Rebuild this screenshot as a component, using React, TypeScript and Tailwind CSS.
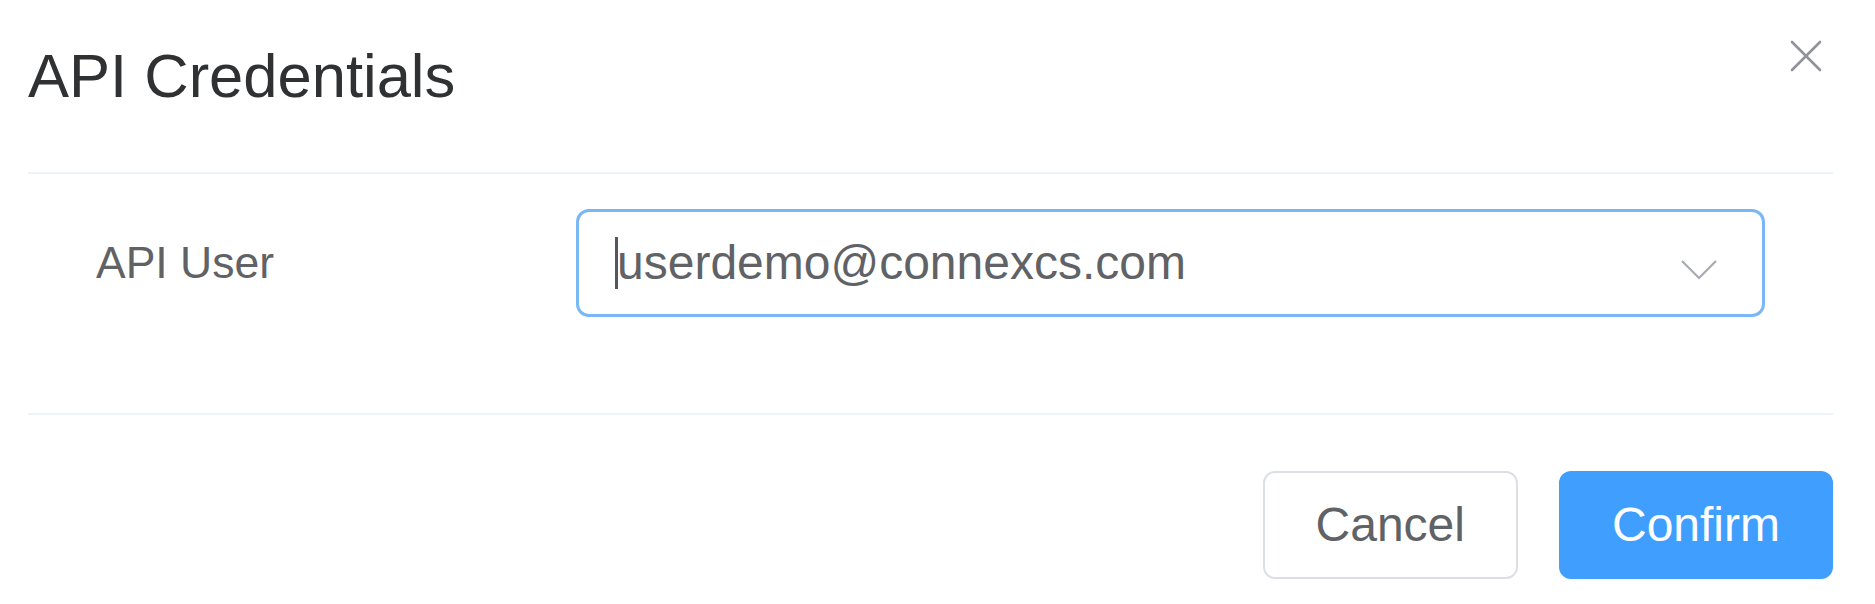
import React from "react";

/** Close icon in the dialog header */
function CloseIcon() {
  return (
    <svg width="32" height="32" viewBox="0 0 32 32" className="mr-[11px] shrink-0">
      <path d="M2 2 L30 30 M30 2 L2 30" stroke="#909399" strokeWidth="2.6" strokeLinecap="round" fill="none" />
    </svg>
  );
}

/** Select arrow */
function ChevronDown() {
  return (
    <svg width="36" height="36" viewBox="0 0 36 36" className="mr-[45px] shrink-0">
      <polyline points="1,16 18,33 35,16" stroke="#a8abb2" strokeWidth="2.2" fill="none" />
    </svg>
  );
}

export default function App() {
  return (
    <div className="w-[1875px] h-[604px] bg-white overflow-hidden font-['Liberation_Sans',Arial,sans-serif]">
      <div className="pl-[28px] pr-[42px]">
        {/* Header */}
        <div className="flex items-start justify-between pt-[40px]">
          <h2 className="mt-[5px] text-[61.5px] leading-[62px] text-[#303133] font-normal">API Credentials</h2>
          <CloseIcon />
        </div>

        <div className="mt-[65px] h-[2px] bg-[#edf3fa]" />

        {/* Body */}
        <div className="pt-[35px] pb-[96px] px-[68px] flex items-center">
          <label className="w-[480px] shrink-0 text-[44.5px] leading-[108px] text-[#606266]">API User</label>
          <div className="flex-1 h-[108px] border-[3px] border-[#79b7f5] rounded-[13px] flex items-center">
            <div className="flex-1 pl-[38px] relative text-[48px] text-[#606266]">
              <span className="absolute left-[36px] top-1/2 -translate-y-1/2 w-[3px] h-[52px] bg-[#55575c]" />
              userdemo@connexcs.com
            </div>
            <ChevronDown />
          </div>
        </div>

        <div className="h-[2px] bg-[#edf3fa]" />

        {/* Footer */}
        <div className="pt-[56px] flex justify-end gap-[41px]">
          <button className="h-[108px] px-[51px] border-2 border-[#dcdfe6] rounded-[12px] bg-white text-[48px] text-[#606266]">
            Cancel
          </button>
          <button className="h-[108px] px-[51px] border-2 border-[#409eff] rounded-[12px] bg-[#409eff] text-[48px] text-white">
            Confirm
          </button>
        </div>
      </div>
    </div>
  );
}
